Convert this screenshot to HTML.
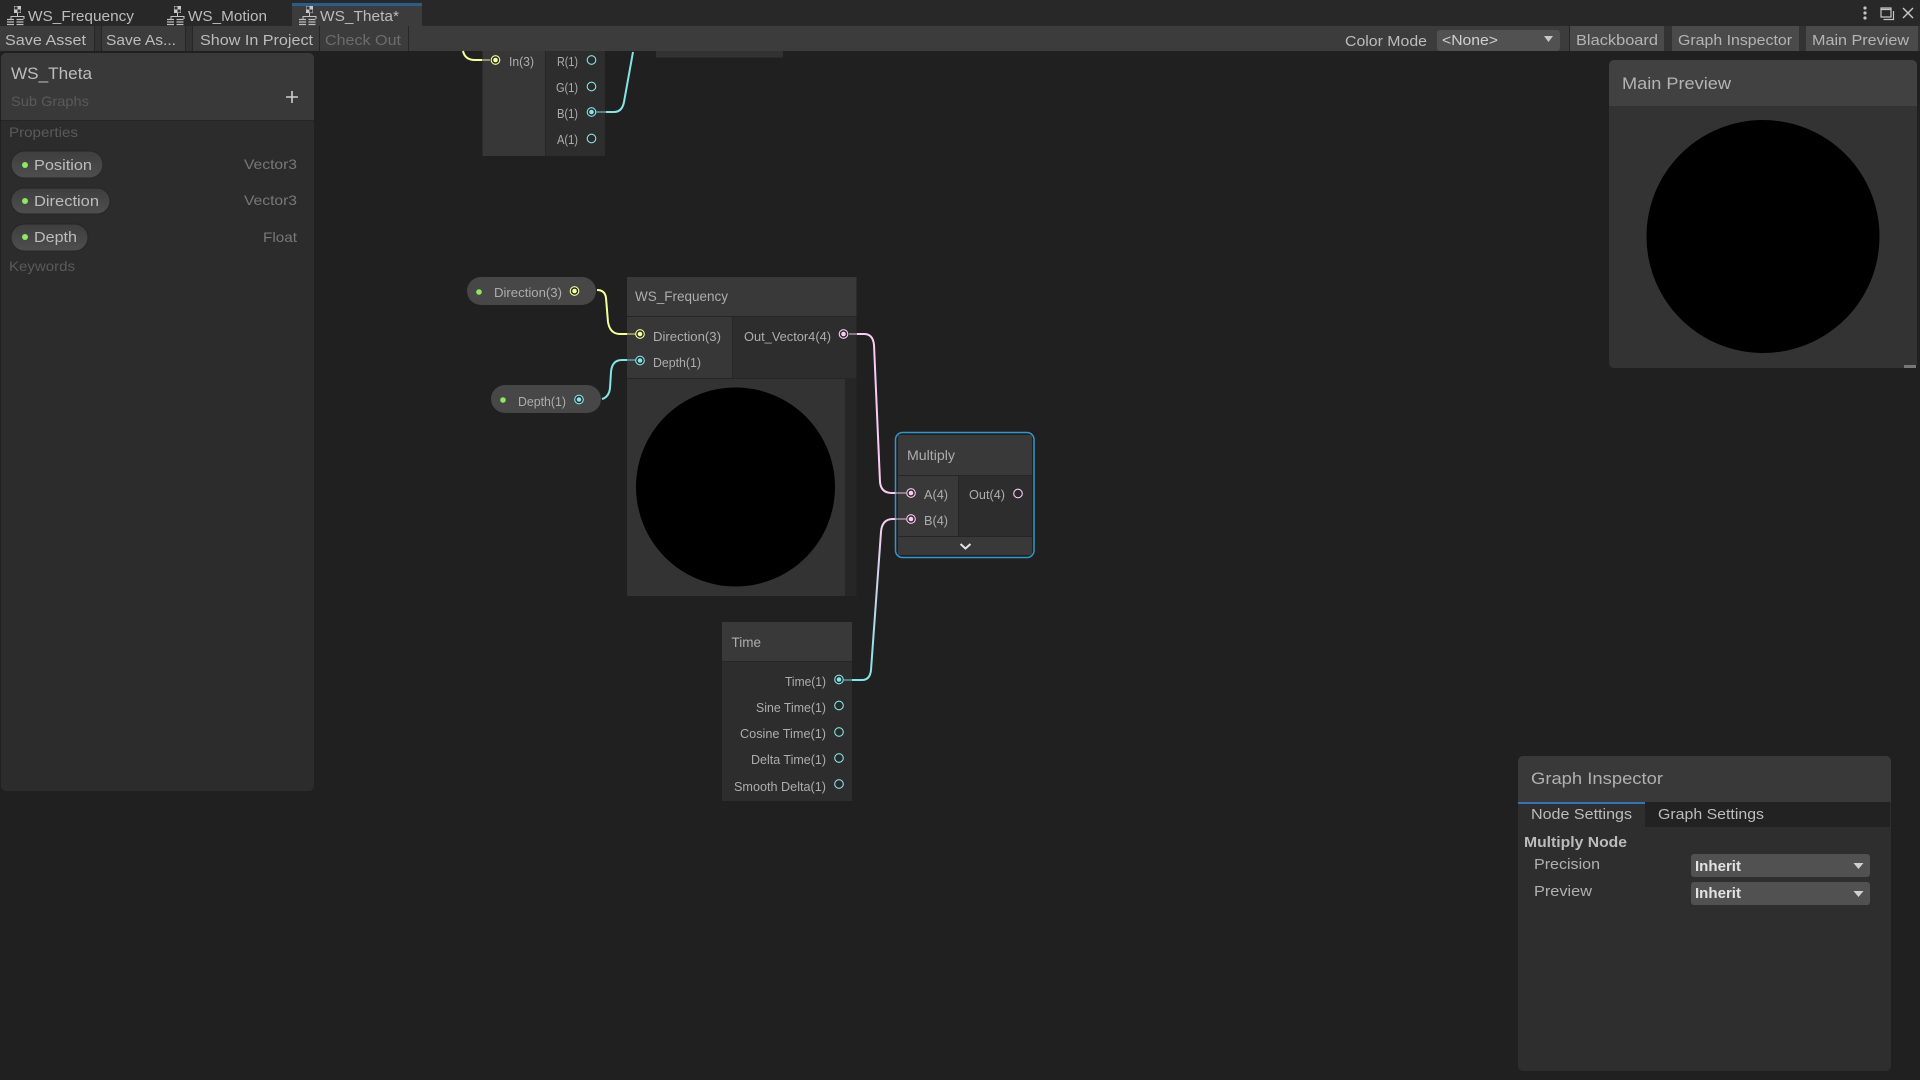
<!DOCTYPE html>
<html>
<head>
<meta charset="utf-8">
<title>WS_Theta</title>
<style>
html,body{margin:0;padding:0;background:#202020;width:1920px;height:1080px;overflow:hidden}
svg{display:block}
text{font-family:"Liberation Sans",sans-serif;white-space:pre}
.t{font-size:15px;fill:#bcbcbc}
.n{font-size:13px;fill:#adadad}
.h{font-size:14px;fill:#adadad}
.d{font-size:14px;fill:#5a5a5a}
.g{font-size:14px;fill:#787878}
.p{font-size:15px;fill:#bcbcbc}
.b{font-weight:bold}
.w{fill:none;stroke-width:2}
</style>
</head>
<body>
<svg width="1920" height="1080" viewBox="0 0 1920 1080" xmlns="http://www.w3.org/2000/svg">
<defs>
<linearGradient id="tw" gradientUnits="userSpaceOnUse" x1="0" y1="679" x2="0" y2="519">
<stop offset="0" stop-color="#84e4e7"/><stop offset="1" stop-color="#fbcbf4"/>
</linearGradient>
<linearGradient id="pill" x1="0" y1="0" x2="0" y2="1">
<stop offset="0" stop-color="#3e3e3e"/><stop offset="1" stop-color="#4e4e4e"/>
</linearGradient>
<g id="ic" fill="none">
<rect x="7" y="0" width="7" height="7" fill="#c8c8c8"/>
<rect x="7.5" y="0.5" width="3" height="3" fill="#333"/><rect x="10.5" y="3.5" width="3" height="3" fill="#333"/>
<path d="M10.5 7v3M4 13v-2.5h13V13" stroke="#c4c4c4" stroke-width="1"/>
<path d="M0 13.5h7M0 16h7M0 18.5h7M0 21h7M9.5 13.5h7M9.5 16h7M9.5 18.5h7M9.5 21h7" stroke="#bdbdbd" stroke-width="1.2"/>
</g>
</defs>

<!-- canvas -->
<rect width="1920" height="1080" fill="#202020"/>

<!-- tab bar -->
<rect width="1920" height="26" fill="#282828"/>
<rect x="292" y="3" width="130" height="23" fill="#3c3c3c"/>
<rect x="292" y="3" width="130" height="3" fill="#2c5d87"/>
<use href="#ic" x="7" y="6"/>
<use href="#ic" x="167" y="6"/>
<use href="#ic" x="299" y="6"/>
<text class="t" x="28" y="21" textLength="106" lengthAdjust="spacingAndGlyphs">WS_Frequency</text>
<text class="t" x="188" y="21" textLength="79" lengthAdjust="spacingAndGlyphs">WS_Motion</text>
<text class="t" x="320" y="21" textLength="79" lengthAdjust="spacingAndGlyphs">WS_Theta*</text>
<circle cx="1865" cy="8" r="1.6" fill="#c4c4c4"/><circle cx="1865" cy="13" r="1.6" fill="#c4c4c4"/><circle cx="1865" cy="18" r="1.6" fill="#c4c4c4"/>
<path d="M1881 8h10v9h-10zM1881 9.500h10M1893.500 11v8.500h-10" fill="none" stroke="#c4c4c4" stroke-width="1.2"/>
<path d="M1903 8l10 10M1913 8l-10 10" fill="none" stroke="#c8c8c8" stroke-width="1.4"/>

<!-- toolbar -->
<rect y="26" width="1920" height="25" fill="#3c3c3c"/>
<rect x="94" y="26" width="8" height="25" fill="#333"/><rect x="94" y="26" width="1" height="25" fill="#262626"/><rect x="101" y="26" width="1" height="25" fill="#262626"/>
<rect x="185" y="26" width="8" height="25" fill="#333"/><rect x="185" y="26" width="1" height="25" fill="#262626"/><rect x="192" y="26" width="1" height="25" fill="#262626"/>
<rect x="319" y="26" width="1" height="25" fill="#262626"/>
<rect x="408" y="26" width="1" height="25" fill="#262626"/>
<text class="t" x="5" y="45" textLength="81" lengthAdjust="spacingAndGlyphs">Save Asset</text>
<text class="t" x="106" y="45" textLength="70" lengthAdjust="spacingAndGlyphs">Save As...</text>
<text class="t" x="200" y="45" textLength="113" lengthAdjust="spacingAndGlyphs">Show In Project</text>
<text class="t" x="325" y="45" textLength="76" lengthAdjust="spacingAndGlyphs" style="fill:#6c6c6c">Check Out</text>

<text class="t" x="1345" y="46" textLength="82" lengthAdjust="spacingAndGlyphs">Color Mode</text>
<rect x="1437" y="30" width="123" height="21" rx="3" fill="#515151"/>
<text class="t" x="1442" y="45" textLength="56" lengthAdjust="spacingAndGlyphs" style="fill:#d0d0d0">&lt;None&gt;</text>
<path d="M1544 36h9l-4.500 6z" fill="#c8c8c8"/>
<rect x="1569" y="26" width="1" height="25" fill="#262626"/>
<rect x="1570" y="26" width="94" height="25" fill="#4a4a4a"/>
<rect x="1664" y="26" width="8" height="25" fill="#333"/>
<rect x="1672" y="26" width="127" height="25" fill="#4a4a4a"/>
<rect x="1799" y="26" width="7" height="25" fill="#333"/>
<rect x="1806" y="26" width="112" height="25" fill="#4a4a4a"/>
<rect x="1918" y="26" width="2" height="25" fill="#333"/>
<text class="t" x="1576" y="45" textLength="82" lengthAdjust="spacingAndGlyphs" style="fill:#b4b4b4">Blackboard</text>
<text class="t" x="1678" y="45" textLength="114" lengthAdjust="spacingAndGlyphs" style="fill:#b4b4b4">Graph Inspector</text>
<text class="t" x="1812" y="45" textLength="97" lengthAdjust="spacingAndGlyphs" style="fill:#b4b4b4">Main Preview</text>

<!-- blackboard -->
<rect x="1" y="53" width="313" height="738" rx="5" fill="#2c2c2c"/>
<path d="M1 120V58a5 5 0 0 1 5-5h303a5 5 0 0 1 5 5v62z" fill="#393939"/>
<rect x="1" y="120" width="313" height="1" fill="#252525"/>
<text x="11" y="79" textLength="81" lengthAdjust="spacingAndGlyphs" style="font-size:17px;fill:#bcbcbc">WS_Theta</text>
<text class="d" x="11" y="106" textLength="78" lengthAdjust="spacingAndGlyphs">Sub Graphs</text>
<path d="M286 97h12M292 91v12" stroke="#cfcfcf" stroke-width="1.6"/>
<text class="d" x="9" y="137" textLength="69" lengthAdjust="spacingAndGlyphs">Properties</text>
<rect x="11" y="151" width="92" height="27" rx="13.500" fill="url(#pill)" stroke="#262626"/>
<rect x="11" y="188" width="99" height="26" rx="13" fill="url(#pill)" stroke="#262626"/>
<rect x="11" y="224" width="77" height="27" rx="13.500" fill="url(#pill)" stroke="#262626"/>
<circle cx="25" cy="165" r="3" fill="#8ee860"/><circle cx="25" cy="201" r="3" fill="#8ee860"/><circle cx="25" cy="237" r="3" fill="#8ee860"/>
<text class="p" x="34" y="170" textLength="58" lengthAdjust="spacingAndGlyphs">Position</text>
<text class="p" x="34" y="206" textLength="65" lengthAdjust="spacingAndGlyphs">Direction</text>
<text class="p" x="34" y="242" textLength="43" lengthAdjust="spacingAndGlyphs">Depth</text>
<text class="g" x="244" y="169" textLength="53" lengthAdjust="spacingAndGlyphs">Vector3</text>
<text class="g" x="244" y="205" textLength="53" lengthAdjust="spacingAndGlyphs">Vector3</text>
<text class="g" x="263" y="242" textLength="34" lengthAdjust="spacingAndGlyphs">Float</text>
<text class="d" x="9" y="271" textLength="66" lengthAdjust="spacingAndGlyphs">Keywords</text>

<!-- top partial node -->
<rect x="482.500" y="51" width="62.500" height="105" fill="#373737"/>
<rect x="545" y="51" width="60" height="105" fill="#2d2d2d"/>
<rect x="545" y="51" width="1" height="105" fill="#262626"/>
<rect x="656" y="51" width="127" height="6" fill="#323232"/>
<rect x="656" y="57" width="127" height="1" fill="#282828"/>
<text class="n" x="509" y="66" textLength="25" lengthAdjust="spacingAndGlyphs">In(3)</text>
<text class="n" x="557" y="66" textLength="21" lengthAdjust="spacingAndGlyphs">R(1)</text>
<text class="n" x="556" y="92" textLength="22" lengthAdjust="spacingAndGlyphs">G(1)</text>
<text class="n" x="557" y="118" textLength="21" lengthAdjust="spacingAndGlyphs">B(1)</text>
<text class="n" x="557" y="144" textLength="21" lengthAdjust="spacingAndGlyphs">A(1)</text>

<!-- WS_Frequency -->
<rect x="627" y="277" width="229.500" height="39" fill="#393939"/>
<rect x="627" y="316" width="229.500" height="1" fill="#262626"/>
<rect x="627" y="317" width="105" height="61" fill="#373737"/>
<rect x="732" y="317" width="124.500" height="61" fill="#2d2d2d"/>
<rect x="732" y="317" width="1" height="61" fill="#262626"/>
<rect x="627" y="378" width="229.500" height="1" fill="#262626"/>
<rect x="627" y="379" width="218" height="217" fill="#333"/>
<rect x="845" y="379" width="11.500" height="217" fill="#262626"/>
<circle cx="735.500" cy="487" r="99.500" fill="#000"/>
<text class="h" x="635" y="301" textLength="93" lengthAdjust="spacingAndGlyphs">WS_Frequency</text>
<text class="n" x="653" y="341" textLength="68" lengthAdjust="spacingAndGlyphs">Direction(3)</text>
<text class="n" x="653" y="367" textLength="48" lengthAdjust="spacingAndGlyphs">Depth(1)</text>
<text class="n" x="744" y="341" textLength="87" lengthAdjust="spacingAndGlyphs">Out_Vector4(4)</text>

<!-- property nodes -->
<rect x="467" y="277" width="129" height="28" rx="14" fill="#474747"/>
<circle cx="479" cy="292" r="2.800" fill="#8ee860"/>
<text class="n" x="494" y="297" textLength="68" lengthAdjust="spacingAndGlyphs">Direction(3)</text>
<rect x="491" y="385" width="110" height="28" rx="14" fill="#474747"/>
<circle cx="503" cy="400" r="2.800" fill="#8ee860"/>
<text class="n" x="518" y="406" textLength="48" lengthAdjust="spacingAndGlyphs">Depth(1)</text>

<!-- Time -->
<rect x="722" y="622" width="130" height="179" fill="#2d2d2d"/>
<rect x="722" y="622" width="130" height="39" fill="#393939"/>
<rect x="722" y="661" width="130" height="1" fill="#262626"/>
<text class="h" x="731.500" y="647" textLength="29.500" lengthAdjust="spacingAndGlyphs">Time</text>
<text class="n" x="785" y="686" textLength="41" lengthAdjust="spacingAndGlyphs">Time(1)</text>
<text class="n" x="756" y="712" textLength="70" lengthAdjust="spacingAndGlyphs">Sine Time(1)</text>
<text class="n" x="740" y="738" textLength="86" lengthAdjust="spacingAndGlyphs">Cosine Time(1)</text>
<text class="n" x="751" y="764" textLength="75" lengthAdjust="spacingAndGlyphs">Delta Time(1)</text>
<text class="n" x="734" y="791" textLength="92" lengthAdjust="spacingAndGlyphs">Smooth Delta(1)</text>

<!-- Multiply -->
<rect x="895.500" y="432.500" width="138.500" height="125" rx="7" fill="#202020" stroke="#2f97cc" stroke-width="1.500"/>
<rect x="898" y="435" width="134" height="40" fill="#393939"/>
<rect x="898" y="475" width="134" height="1" fill="#262626"/>
<rect x="898" y="476" width="60" height="60" fill="#393939"/>
<rect x="958" y="476" width="74" height="60" fill="#2d2d2d"/>
<rect x="958" y="476" width="1" height="60" fill="#262626"/>
<rect x="898" y="536" width="134" height="1" fill="#262626"/>
<rect x="898" y="537" width="134" height="18" fill="#393939"/>
<path d="M960.500 544l5 4.500 5-4.500" fill="none" stroke="#e4e4e4" stroke-width="2"/>
<text class="h" x="907" y="460" textLength="48" lengthAdjust="spacingAndGlyphs">Multiply</text>
<text class="n" x="924" y="499" textLength="24" lengthAdjust="spacingAndGlyphs">A(4)</text>
<text class="n" x="924" y="525" textLength="24" lengthAdjust="spacingAndGlyphs">B(4)</text>
<text class="n" x="969" y="499" textLength="36" lengthAdjust="spacingAndGlyphs">Out(4)</text>

<!-- wires -->
<path class="w" stroke="#f6ff9a" d="M463 51Q465 60 475 60H482"/>
<path class="w" stroke="#f6ff9a" stroke-opacity=".45" d="M482 60H490"/>
<path class="w" stroke="#84e4e7" d="M606 112H614Q622 112 624 102L633 52"/>
<path class="w" stroke="#84e4e7" stroke-opacity=".45" d="M596 112H606"/>
<path class="w" stroke="#f6ff9a" d="M597 290Q605 290 606 298L608 322Q610 334 620 334H627"/>
<path class="w" stroke="#f6ff9a" stroke-opacity=".45" d="M627 334H636"/>
<path class="w" stroke="#84e4e7" d="M602 399Q609 397 610 388L611 372Q612 360 622 360H627"/>
<path class="w" stroke="#84e4e7" stroke-opacity=".45" d="M627 360H636"/>
<path class="w" stroke="#fbcbf4" d="M857 334H864Q873 334 874 345L880 482Q881 493 892 493H895"/>
<path class="w" stroke="#fbcbf4" stroke-opacity=".45" d="M849 334H857M895 493H906"/>
<path class="w" stroke="url(#tw)" d="M852 680H862Q870 680 871 670L881 532Q882 519 893 519H895"/>
<path class="w" stroke="#84e4e7" stroke-opacity=".45" d="M844 680H852"/>
<path class="w" stroke="#fbcbf4" stroke-opacity=".45" d="M895 519H906"/>

<!-- ports -->
<g fill="#2a2a2a" stroke-width="1.100">
<g stroke="#f6ff9a">
<circle cx="495.500" cy="60" r="4.300"/><circle cx="574.500" cy="291" r="4.300"/><circle cx="640" cy="334" r="4.300"/>
</g>
<g stroke="#84e4e7">
<circle cx="591.500" cy="60" r="4.300"/><circle cx="591.500" cy="86.500" r="4.300"/><circle cx="591.500" cy="112" r="4.300"/><circle cx="591.500" cy="138.500" r="4.300"/>
<circle cx="579" cy="399.500" r="4.300"/><circle cx="640" cy="360.500" r="4.300"/>
<circle cx="839" cy="679.500" r="4.300"/><circle cx="839" cy="705.500" r="4.300"/><circle cx="839" cy="732" r="4.300"/><circle cx="839" cy="758" r="4.300"/><circle cx="839" cy="784" r="4.300"/>
</g>
<g stroke="#fbcbf4">
<circle cx="843.500" cy="334" r="4.300"/><circle cx="911" cy="493" r="4.300"/><circle cx="911" cy="519" r="4.300"/><circle cx="1018" cy="493.500" r="4.300"/>
</g>
</g>
<g fill="#f6ff9a"><circle cx="495.500" cy="60" r="2.300"/><circle cx="574.500" cy="291" r="2.300"/><circle cx="640" cy="334" r="2.300"/></g>
<g fill="#84e4e7"><circle cx="591.500" cy="112" r="2.300"/><circle cx="579" cy="399.500" r="2.300"/><circle cx="640" cy="360.500" r="2.300"/><circle cx="839" cy="679.500" r="2.300"/></g>
<g fill="#fbcbf4"><circle cx="843.500" cy="334" r="2.300"/><circle cx="911" cy="493" r="2.300"/><circle cx="911" cy="519" r="2.300"/></g>

<!-- main preview -->
<rect x="1609" y="60" width="308" height="308" rx="5" fill="#333"/>
<path d="M1609 106V65a5 5 0 0 1 5-5h298a5 5 0 0 1 5 5v41z" fill="#414141"/>
<circle cx="1763" cy="236.500" r="116.500" fill="#000"/>
<rect x="1904" y="365" width="12" height="3" fill="#777"/>
<text x="1622" y="89" textLength="109" lengthAdjust="spacingAndGlyphs" style="font-size:17px;fill:#b4b4b4">Main Preview</text>

<!-- graph inspector -->
<rect x="1518" y="756" width="373" height="315" rx="5" fill="#2e2e2e"/>
<path d="M1518 802V761a5 5 0 0 1 5-5h363a5 5 0 0 1 5 5v41z" fill="#393939"/>
<rect x="1645" y="802" width="245" height="25" fill="#222"/>
<rect x="1518" y="802" width="127" height="2" fill="#3a72b0"/>
<text x="1531" y="784" textLength="132" lengthAdjust="spacingAndGlyphs" style="font-size:17px;fill:#b0b0b0">Graph Inspector</text>
<text class="p" x="1531" y="819" textLength="101" lengthAdjust="spacingAndGlyphs">Node Settings</text>
<text class="p" x="1658" y="819" textLength="106" lengthAdjust="spacingAndGlyphs">Graph Settings</text>
<text class="p b" x="1524" y="847" textLength="103" lengthAdjust="spacingAndGlyphs">Multiply Node</text>
<text class="p" x="1534" y="869" textLength="66" lengthAdjust="spacingAndGlyphs" style="fill:#b0b0b0">Precision</text>
<text class="p" x="1534" y="896" textLength="58" lengthAdjust="spacingAndGlyphs" style="fill:#b0b0b0">Preview</text>
<rect x="1691" y="854" width="179" height="23" rx="3" fill="#515151"/>
<rect x="1691" y="882" width="179" height="23" rx="3" fill="#515151"/>
<text class="p b" x="1695" y="871" textLength="46" lengthAdjust="spacingAndGlyphs" style="fill:#e2e2e2">Inherit</text>
<text class="p b" x="1695" y="898" textLength="46" lengthAdjust="spacingAndGlyphs" style="fill:#e2e2e2">Inherit</text>
<path d="M1853.500 863h10l-5 6zM1853.500 891h10l-5 6z" fill="#d0d0d0"/>
</svg>
</body>
</html>
